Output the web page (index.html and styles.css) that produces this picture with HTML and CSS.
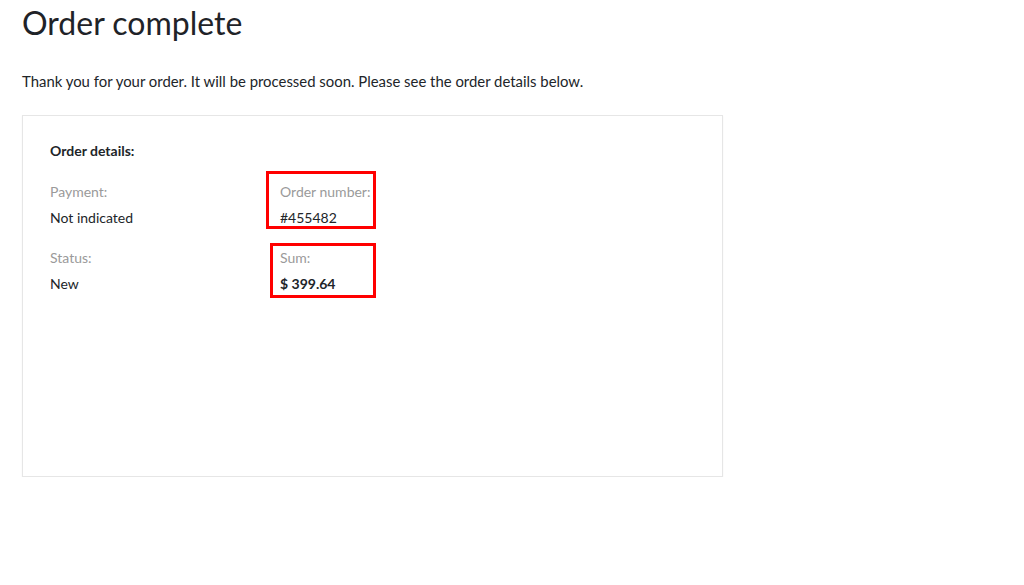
FILE: index.html
```html
<!DOCTYPE html>
<html lang="en">
<head>
<meta charset="utf-8">
<title>Order complete</title>
<link rel="stylesheet" href="styles.css">
</head>
<body>
<main class="page">
  <h1 class="title">Order complete</h1>
  <p class="intro">Thank you for your order. It will be processed soon. Please see the order details below.</p>
  <section class="card">
    <h2 class="card-title">Order details:</h2>
    <div class="grid">
      <div class="cell">
        <div class="label">Payment:</div>
        <div class="value">Not indicated</div>
      </div>
      <div class="cell">
        <div class="label">Order number:</div>
        <div class="value">#455482</div>
        <span class="mark mark-number"></span>
      </div>
      <div class="cell">
        <div class="label">Status:</div>
        <div class="value">New</div>
      </div>
      <div class="cell">
        <div class="label">Sum:</div>
        <div class="value strong">$ 399.64</div>
        <span class="mark mark-sum"></span>
      </div>
    </div>
  </section>
</main>
</body>
</html>
```

FILE: styles.css
```css
html, body {
  margin: 0;
  padding: 0;
  background: #ffffff;
}

body {
  font-family: Lato, "Open Sans", "Liberation Sans", sans-serif;
  color: #212529;
}

.page {
  padding: 0 22px;
}

.title {
  margin: 0;
  padding-top: 4px;
  font-size: 32px;
  font-weight: 400;
  line-height: 38px;
  color: #1f2328;
}

.intro {
  margin: 29px 0 0;
  font-size: 14.9px;
  line-height: 20px;
}

.card {
  box-sizing: border-box;
  width: 701px;
  height: 362px;
  margin-top: 24px;
  padding: 25px 27px;
  border: 1px solid #e6e6e6;
  box-shadow: 0 1px 2px rgba(0, 0, 0, 0.04);
}

.card-title {
  margin: 0;
  font-size: 14px;
  font-weight: 700;
  line-height: 20px;
}

.grid {
  display: grid;
  grid-template-columns: 230px 200px;
  row-gap: 20px;
  margin-top: 21px;
}

.cell {
  position: relative;
}

.label {
  font-size: 14px;
  line-height: 20px;
  color: #9a9a9a;
}

.value {
  margin-top: 6px;
  font-size: 14px;
  line-height: 20px;
}

.strong {
  font-weight: 700;
}

.mark {
  position: absolute;
  border: 3px solid #ff0000;
  box-sizing: border-box;
  pointer-events: none;
}

.mark-number {
  left: -14px;
  top: -11px;
  width: 110px;
  height: 58px;
}

.mark-sum {
  left: -10px;
  top: -5px;
  width: 106px;
  height: 55px;
}
```
